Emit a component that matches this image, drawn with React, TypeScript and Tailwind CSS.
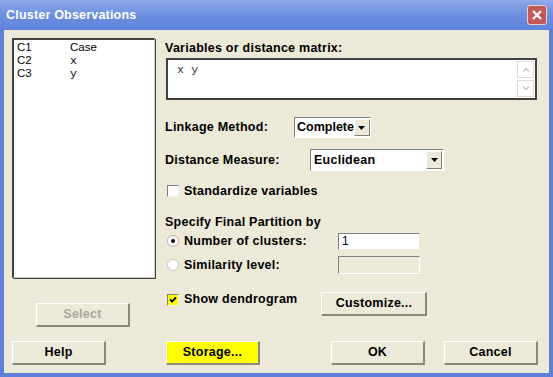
import React from "react";

const font = { fontFamily: '"Liberation Sans", Arial, sans-serif' };

function Btn({ children, className = "", disabled = false }: { children: React.ReactNode; className?: string; disabled?: boolean }) {
  return (
    <div
      className={`flex items-center justify-center border-t border-l border-t-white border-l-white border-r-2 border-b-2 border-r-[#8a8878] border-b-[#8a8878] text-[12.5px] tracking-[0.25px] font-bold ${disabled ? "text-[#a8a8a0]" : "text-black"} ${className}`}
    >
      {children}
    </div>
  );
}

function Arrow() {
  return (
    <div className="w-[16px] h-full flex items-center justify-center bg-[#ece9d8] border-t border-l border-t-white border-l-white border-r border-b border-r-[#808080] border-b-[#808080]">
      <svg width="7" height="4" viewBox="0 0 7 4"><path d="M0 0h7L3.5 4z" fill="#000" /></svg>
    </div>
  );
}

export default function App() {
  return (
    <div className="w-[553px] h-[377px] flex flex-col bg-[#5f7fd8] overflow-hidden" style={font}>
      <div className="h-[30px] flex items-center justify-between pl-[6px] pr-[6px] bg-gradient-to-b from-[#8fa9ea] via-[#6d8fe0] to-[#5f82dc]">
        <span className="text-white font-bold text-[12.5px] tracking-[0.2px]">Cluster Observations</span>
        <div className="w-[20px] h-[20px] rounded-[3px] border border-[#e8d0d0] bg-[#c4585a] flex items-center justify-center">
          <svg width="10" height="10" viewBox="0 0 10 10"><path d="M1 1L9 9M9 1L1 9" stroke="#fff" strokeWidth="2.2" /></svg>
        </div>
      </div>
      <div className="flex-1 mx-[4px] mb-[4px] bg-[#ece9d8] flex flex-col">
        <div className="flex pt-[8px]">
          <div className="flex flex-col ml-[8px] w-[143px]">
            <div className="h-[240px] bg-white border-t-2 border-l-2 border-t-[#404040] border-l-[#404040] border-r border-b border-r-[#d4d0c8] border-b-[#d4d0c8] shadow-[1px_1px_0_#404040] pl-[3px] pt-[1px] text-[11.5px] leading-[13px] text-black">
              <div className="flex"><span className="w-[53px]">C1</span><span>Case</span></div>
              <div className="flex"><span className="w-[53px]">C2</span><span style={{ fontFamily: '"Liberation Mono", monospace' }}>x</span></div>
              <div className="flex"><span className="w-[53px]">C3</span><span style={{ fontFamily: '"Liberation Mono", monospace' }}>y</span></div>
            </div>
            <Btn disabled className="ml-[24px] mt-[25px] w-[94px] h-[24px]">Select</Btn>
          </div>
          <div className="flex flex-col ml-[10px] text-[12.5px] tracking-[0.25px] font-bold text-black">
            <div className="mt-[3px] leading-[14px]">Variables or distance matrix:</div>
            <div className="mt-[3px] ml-[1px] w-[371px] h-[42px] bg-white border-2 border-[#404040] flex">
              <div className="flex-1 pl-[9px] pt-[3px] text-[11.5px] font-normal leading-[14px] text-[#333]" style={{ fontFamily: '"Liberation Mono", monospace' }}>x y</div>
              <div className="w-[17px] flex flex-col justify-between py-[1px] mr-[1px]">
                <div className="h-[17px] border border-[#e0ded4] flex items-center justify-center">
                  <svg width="8" height="5" viewBox="0 0 8 5"><path d="M1 4.5L4 1.5L7 4.5" stroke="#c8c6bc" fill="none" strokeWidth="1.3" /></svg>
                </div>
                <div className="h-[17px] border border-[#e0ded4] flex items-center justify-center">
                  <svg width="8" height="5" viewBox="0 0 8 5"><path d="M1 0.5L4 3.5L7 0.5" stroke="#c8c6bc" fill="none" strokeWidth="1.3" /></svg>
                </div>
              </div>
            </div>
            <div className="flex items-center mt-[17px]">
              <span className="w-[129px]">Linkage Method:</span>
              <div className="w-[77px] h-[21px] bg-white border-t border-l border-t-[#808080] border-l-[#808080] border-r border-b border-r-white border-b-white flex items-center">
                <span className="flex-1 pl-[2px] tracking-normal">Complete</span>
                <div className="h-[17px] mr-[1px] flex"><Arrow /></div>
              </div>
            </div>
            <div className="flex items-center mt-[11px]">
              <span className="w-[145px]">Distance Measure:</span>
              <div className="w-[134px] h-[22px] bg-white border-t border-l border-t-[#808080] border-l-[#808080] border-r border-b border-r-white border-b-white flex items-center">
                <span className="flex-1 pl-[3px]">Euclidean</span>
                <div className="h-[18px] mr-[1px] flex"><Arrow /></div>
              </div>
            </div>
            <div className="flex items-center mt-[11px]">
              <div className="w-[12px] h-[12px] ml-[2px] bg-white border-t border-l border-t-[#808080] border-l-[#808080] border-r border-b border-r-[#f0f0f0] border-b-[#f0f0f0]" />
              <span className="ml-[5px]">Standardize variables</span>
            </div>
            <div className="mt-[14px] leading-[14px]">Specify Final Partition by</div>
            <div className="flex items-center mt-[3px]">
              <div className="w-[12px] h-[12px] ml-[2px] rounded-full bg-white border border-[#b8b6ac] flex items-center justify-center">
                <div className="w-[4px] h-[4px] rounded-full bg-black" />
              </div>
              <span className="ml-[5px] w-[154px]">Number of clusters:</span>
              <div className="w-[82px] h-[17px] bg-white border-t border-l border-t-[#808080] border-l-[#808080] border-r border-b border-r-[#e8e8e8] border-b-[#e8e8e8] pl-[3px] font-normal text-[12px] leading-[15px]">1</div>
            </div>
            <div className="flex items-center mt-[5px]">
              <div className="w-[12px] h-[12px] ml-[2px] rounded-full bg-white border border-[#c8c6bc]" />
              <span className="ml-[5px] w-[154px]">Similarity level:</span>
              <div className="w-[82px] h-[18px] bg-[#ece9d8] border-t border-l border-t-[#808080] border-l-[#808080] border-r border-b border-r-white border-b-white" />
            </div>
            <div className="flex items-start mt-[18px]">
              <div className="flex items-center h-[15px]">
                <div className="w-[12px] h-[12px] ml-[2px] bg-[#ffff00] border-t border-l border-t-[#808080] border-l-[#808080] border-r border-b border-r-[#f0f0f0] border-b-[#f0f0f0] flex items-center justify-center">
                  <svg width="8" height="8" viewBox="0 0 8 8"><path d="M1 3.5L3 5.5L7 1.5" stroke="#000" strokeWidth="1.8" fill="none" /></svg>
                </div>
                <span className="ml-[5px]">Show dendrogram</span>
              </div>
              <Btn className="ml-[24px] w-[106px] h-[24px]">Customize...</Btn>
            </div>
          </div>
        </div>
        <div className="flex mt-[14px]">
          <Btn className="ml-[8px] w-[94px] h-[24px]">Help</Btn>
          <Btn className="ml-[60px] w-[94px] h-[24px] bg-[#ffff00]">Storage...</Btn>
          <Btn className="ml-[71px] w-[94px] h-[24px]">OK</Btn>
          <Btn className="ml-[19px] w-[94px] h-[24px]">Cancel</Btn>
        </div>
      </div>
    </div>
  );
}
